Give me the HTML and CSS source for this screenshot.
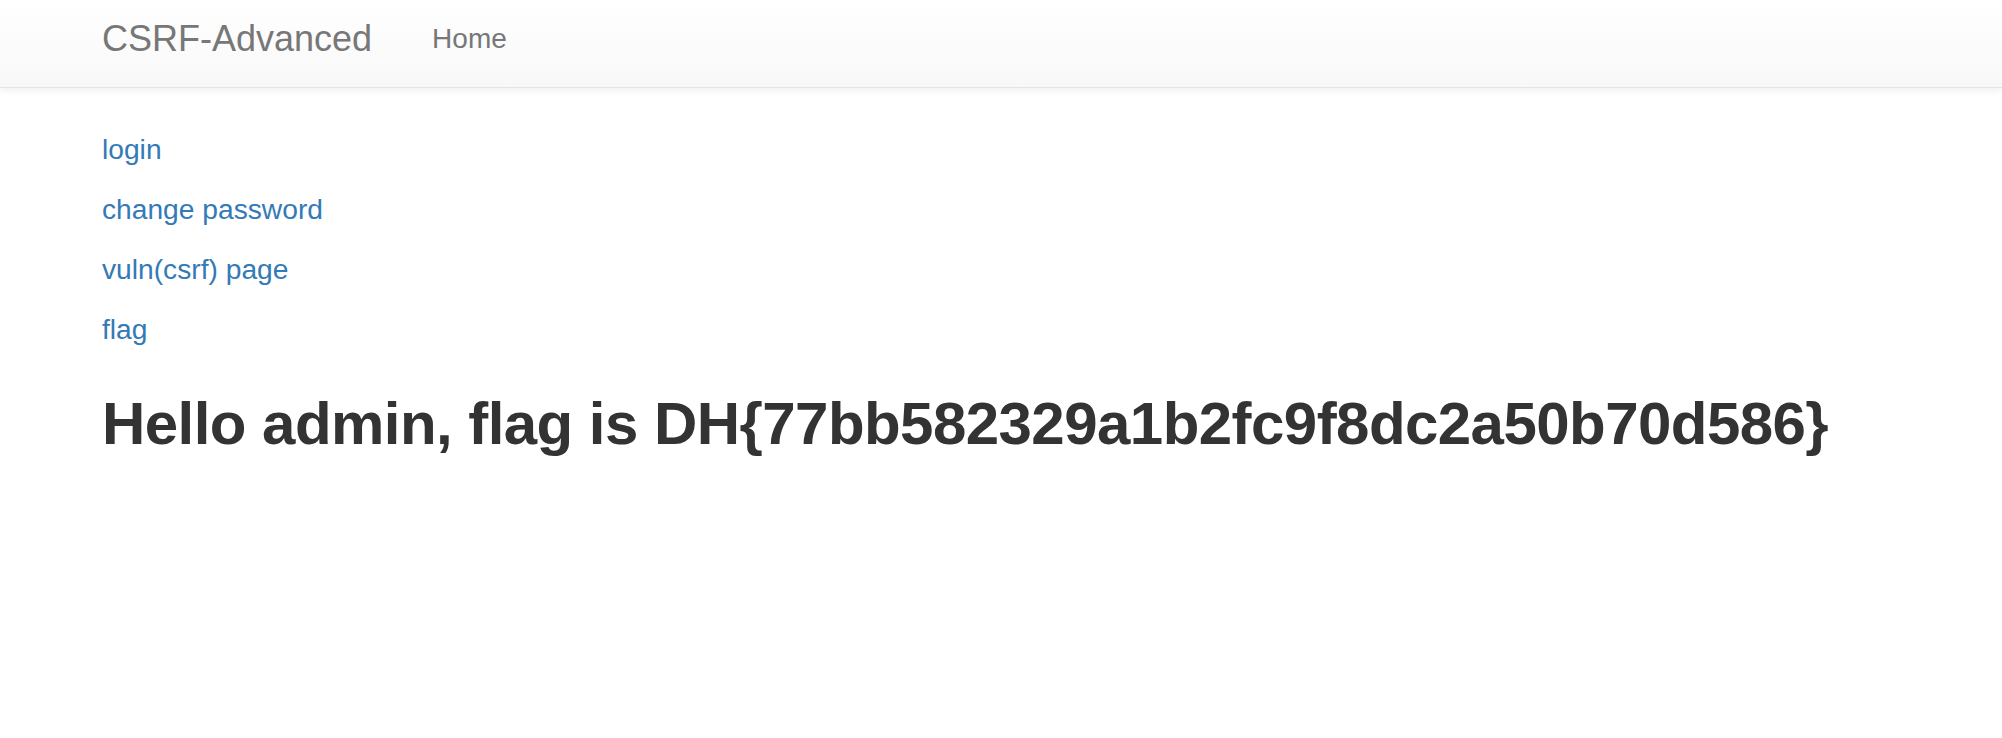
FILE: index.html
```
<!DOCTYPE html>
<html lang="en">
<head>
    <meta charset="UTF-8">
    <meta name="viewport" content="width=device-width, initial-scale=1.0">
    <title>CSRF-Advanced</title>
    <link rel="stylesheet" href="styles.css">
</head>
<body>
    <!-- Top navigation -->
    <nav class="navbar">
        <div class="container navbar-inner">
            <a class="navbar-brand" href="#">CSRF-Advanced</a>
            <a class="nav-link" href="#">Home</a>
        </div>
    </nav>

    <!-- Page content -->
    <div class="container content">
        <p><a href="#">login</a></p>
        <p><a href="#">change password</a></p>
        <p><a href="#">vuln(csrf) page</a></p>
        <p><a href="#">flag</a></p>
        <h2 class="flag-title">Hello admin, flag is DH{77bb582329a1b2fc9f8dc2a50b70d586}</h2>
    </div>
</body>
</html>
```
FILE: styles.css
```
/* General body styling */
body {
    font-family: "Liberation Sans", Arial, sans-serif;
    margin: 0;
    padding: 0;
    background: #fff;
    color: #333;
    font-size: 28px;
    line-height: 40px;
}

a {
    color: #337ab7;
    text-decoration: none;
}

.container {
    padding: 0 102px;
}

/* Navbar */
.navbar {
    height: 87px;
    background: linear-gradient(to bottom, #fff 0%, #f8f8f8 100%);
    border-bottom: 1px solid #e4e4e4;
    box-shadow: 0 2px 8px rgba(0, 0, 0, 0.07);
}

.navbar-inner {
    display: flex;
    align-items: flex-start;
    padding-top: 19px;
}

.navbar-brand {
    color: #777;
    font-size: 36px;
    line-height: 40px;
    padding-right: 30px;
}

.nav-link {
    color: #777;
    font-size: 28px;
    line-height: 40px;
    padding-left: 30px;
}

/* Content */
.content {
    padding-top: 41px;
}

.content p {
    margin: 0 0 20px;
    font-size: 28.2px;
}

.flag-title {
    margin: 42px 0 0;
    font-size: 60px;
    line-height: 66px;
    font-weight: bold;
    letter-spacing: -0.55px;
    color: #333;
}
```
